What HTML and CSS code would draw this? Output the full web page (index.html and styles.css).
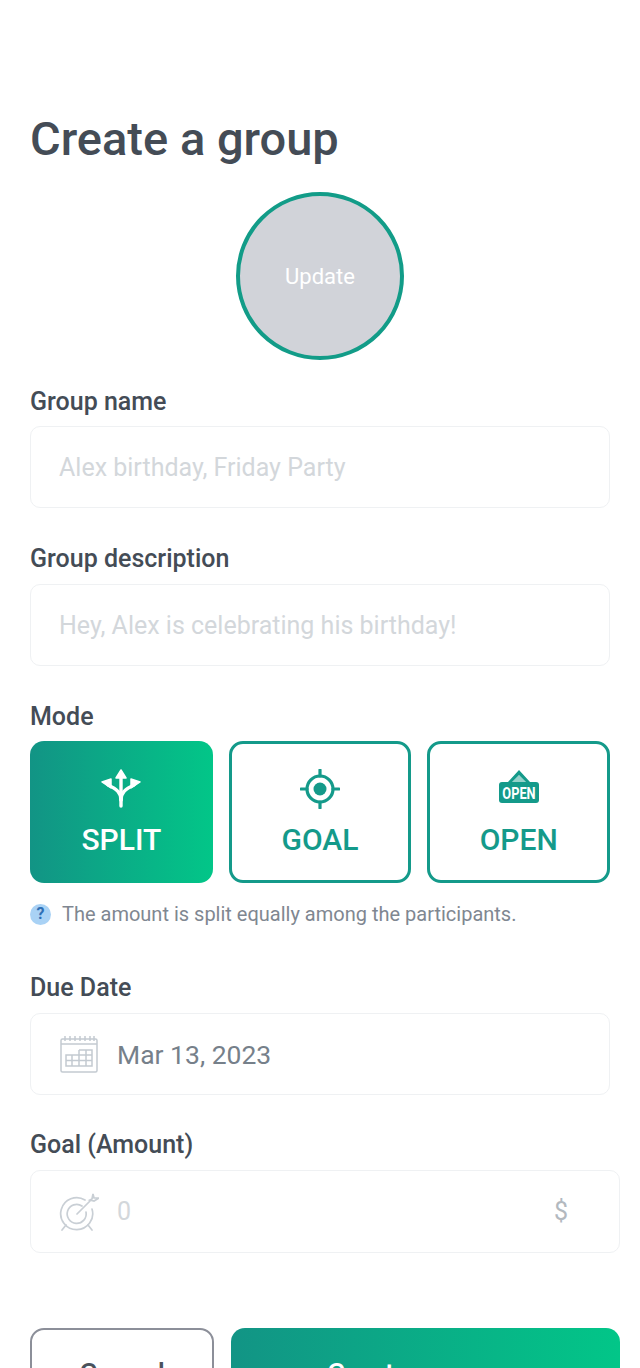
FILE: index.html
```html
<!DOCTYPE html>
<html lang="en">
<head>
  <meta charset="UTF-8" />
  <meta name="viewport" content="width=device-width, initial-scale=1.0"/>
  <title>Create a group</title>
  <link rel="stylesheet" href="styles.css">
</head>
<body>
  <div class="container">
    <h1>Create a group</h1>

    <div class="avatar">Update</div>

    <label class="label-first">Group name</label>
    <div class="field">
      <span class="placeholder">Alex birthday, Friday Party</span>
    </div>

    <label>Group description</label>
    <div class="field">
      <span class="placeholder">Hey, Alex is celebrating his birthday!</span>
    </div>

    <label>Mode</label>
    <div class="modes">
      <div class="mode mode-active">
        <svg class="mode-icon" viewBox="0 0 40 40" fill="none" stroke="currentColor" stroke-width="3.4" stroke-linecap="round" stroke-linejoin="round">
          <path d="M20 37V7"/>
          <path d="M20 31c0-7-4-11-13-15"/>
          <path d="M20 31c0-7 4-11 13-15"/>
          <path d="M20 1l5 8H15z" fill="currentColor" stroke-width="1.5"/>
          <path d="M1 13l9-3 0 9z" fill="currentColor" stroke-width="1.5"/>
          <path d="M39 13l-9-3 0 9z" fill="currentColor" stroke-width="1.5"/>
        </svg>
        <span>SPLIT</span>
      </div>
      <div class="mode">
        <svg class="mode-icon" viewBox="0 0 40 40" fill="none" stroke="currentColor" stroke-width="3.2" stroke-linecap="round">
          <circle cx="20" cy="20" r="13"/>
          <circle cx="20" cy="20" r="6.5" fill="currentColor" stroke="none"/>
          <path d="M20 1v6M20 33v6M1 20h6M33 20h6"/>
        </svg>
        <span>GOAL</span>
      </div>
      <div class="mode">
        <svg class="mode-icon" viewBox="0 0 40 40">
          <path d="M20 1l11 12h-4l-7-7-7 7H9z" fill="currentColor"/>
          <path d="M20 6l7 7H13z" fill="currentColor" opacity="0.45"/>
          <rect x="0" y="13" width="40" height="21" rx="3" fill="currentColor"/>
          <text class="sign-text" x="25" y="30" text-anchor="middle" transform="scale(0.8 1)">OPEN</text>
        </svg>
        <span>OPEN</span>
      </div>
    </div>

    <p class="note">
      <span class="note-icon">?</span>
      The amount is split equally among the participants.
    </p>

    <label class="label-due">Due Date</label>
    <div class="field">
      <svg class="field-icon" viewBox="0 0 40 38" fill="none" stroke="#c3cad1" stroke-width="1.5">
        <rect x="2" y="4" width="36" height="33" rx="1.5"/>
        <path d="M2 9h36M6 1v5M11 1v5M16 1v5M21 1v5M26 1v5M31 1v5M35 1v5"/>
        <path d="M7 20h26v11H7zM7 25.500h26M13 20v11M20 15v16M27 15v16M20 15h13v5"/>
      </svg>
      <span class="value">Mar 13, 2023</span>
    </div>

    <label class="label-goal">Goal (Amount)</label>
    <div class="field field-wide">
      <svg class="field-icon" viewBox="0 0 40 40" fill="none" stroke="#c9cfd5" stroke-width="1.700" stroke-linecap="round">
        <path d="M26 8a16 16 0 1 0 7 9"/>
        <path d="M23 14a9.500 9.500 0 1 0 4 6"/>
        <path d="M18 22L33 7M33 7l1-5 1 4 5 0-5 3-4-1z"/>
        <path d="M7 33l-4 5M29 33l4 5"/>
      </svg>
      <span class="placeholder">0</span>
      <span class="currency">$</span>
    </div>

    <div class="actions">
      <button class="btn-cancel">Cancel</button>
      <button class="btn-create">Create</button>
    </div>
  </div>
</body>
</html>
```

FILE: styles.css
```css
* {
  box-sizing: border-box;
}

html, body {
  height: 1368px;
  overflow: hidden;
}

body {
  font-family: Roboto, sans-serif;
  background: #fff;
  color: #444c56;
  margin: 0;
}

.container {
  padding: 113px 30px 0;
}

h1 {
  font-size: 47px;
  font-weight: 500;
  line-height: 52px;
  margin: 0 0 27px;
}

.avatar {
  width: 168px;
  height: 168px;
  margin: 0 auto;
  display: flex;
  align-items: center;
  justify-content: center;
  border: 4px solid #129c88;
  border-radius: 50%;
  background: #d1d3d9;
  color: #fff;
  font-size: 22px;
}

label {
  display: block;
  font-size: 25px;
  font-weight: 500;
  line-height: 28px;
  margin: 37px 0 11px;
}

.label-first {
  margin: 28px 0 10px;
}

.label-due {
  margin-top: 48px;
}

.label-goal {
  margin-top: 36px;
}

.field {
  width: 580px;
  height: 82px;
  display: flex;
  align-items: center;
  padding: 0 28px;
  background: #fff;
  border: 1px solid #eff1f3;
  border-radius: 10px;
  font-size: 25px;
}

.field-wide {
  width: 590px;
  padding-right: 51px;
  height: 83px;
}

.placeholder {
  color: #d3d7db;
}

.value {
  color: #76808a;
  font-size: 26.5px;
}

.field-icon {
  width: 40px;
  height: 40px;
  margin-right: 18px;
  flex-shrink: 0;
}

.currency {
  margin-left: auto;
  color: #b3b9bf;
}

.modes {
  display: grid;
  grid-template-columns: repeat(3, 1fr);
  gap: 16px;
  margin-top: -1px;
}

.mode {
  height: 142px;
  display: flex;
  flex-direction: column;
  align-items: center;
  justify-content: center;
  gap: 13px;
  padding-top: 2px;
  border: 3px solid #149a8a;
  border-radius: 14px;
  color: #149a8a;
  font-size: 30px;
  font-weight: 500;
}

.mode-active {
  border: none;
  background: linear-gradient(90deg, #129485, #02c688);
  color: #fff;
}

.mode-icon {
  width: 40px;
  height: 40px;
}

.sign-text {
  fill: #fff;
  font-size: 16px;
  font-weight: 700;
}

.note {
  display: flex;
  align-items: center;
  gap: 11px;
  margin: 19px 0 0;
  color: #7f8791;
  font-size: 20px;
  line-height: 24px;
}

.note-icon {
  width: 21px;
  height: 21px;
  display: flex;
  align-items: center;
  justify-content: center;
  border-radius: 50%;
  background: #a9d2f5;
  color: #2f6fb5;
  font-size: 16px;
  font-weight: 700;
}

.actions {
  display: flex;
  gap: 17px;
  width: 590px;
  margin-top: 75px;
}

button {
  height: 90px;
  font-family: inherit;
  font-size: 28px;
  font-weight: 500;
  border-radius: 14px;
}

.btn-cancel {
  width: 184px;
  background: #fff;
  border: 2px solid #8c8f99;
  color: #4a525c;
}

.btn-create {
  flex: 1;
  border: none;
  padding: 0 0 0 96px;
  text-align: left;
  background: linear-gradient(90deg, #129485, #02c688);
  color: #fff;
}
```
